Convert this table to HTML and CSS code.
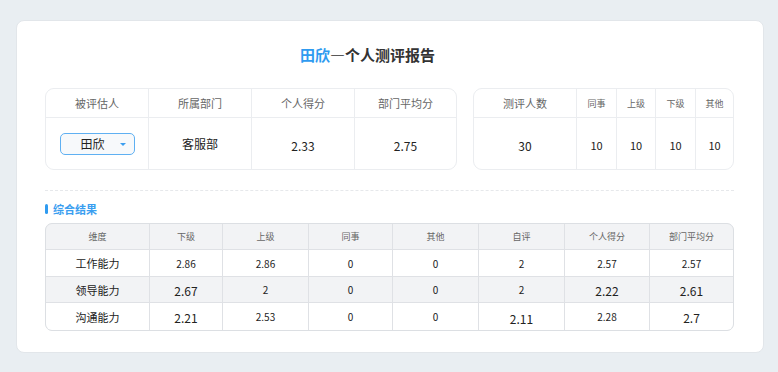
FILE: index.html
```html
<!DOCTYPE html>
<html lang="zh">
<head>
<meta charset="utf-8">
<link rel="stylesheet" href="styles.css">
</head>
<body>
<div class="card">
  <h1 class="title"><span class="name">田欣</span>—个人测评报告</h1>
  <div class="top">
    <div class="grid t1">
      <div class="c h">被评估人</div>
      <div class="c h">所属部门</div>
      <div class="c h">个人得分</div>
      <div class="c h">部门平均分</div>
      <div class="c b"><div class="select"><span>田欣</span><i class="arrow"></i></div></div>
      <div class="c b">客服部</div>
      <div class="c b num">2.33</div>
      <div class="c b num">2.75</div>
    </div>
    <div class="grid t2">
      <div class="c h">测评人数</div>
      <div class="c h sm">同事</div>
      <div class="c h sm">上级</div>
      <div class="c h sm">下级</div>
      <div class="c h sm">其他</div>
      <div class="c b num">30</div>
      <div class="c b num s">10</div>
      <div class="c b num s">10</div>
      <div class="c b num s">10</div>
      <div class="c b num s">10</div>
    </div>
  </div>
  <div class="divider"></div>
  <div class="label">综合结果</div>
  <div class="grid t3">
    <div class="c h3">维度</div>
    <div class="c h3">下级</div>
    <div class="c h3">上级</div>
    <div class="c h3">同事</div>
    <div class="c h3">其他</div>
    <div class="c h3">自评</div>
    <div class="c h3">个人得分</div>
    <div class="c h3">部门平均分</div>

    <div class="c r">工作能力</div>
    <div class="c r n">2.86</div>
    <div class="c r n">2.86</div>
    <div class="c r n">0</div>
    <div class="c r n">0</div>
    <div class="c r n">2</div>
    <div class="c r n">2.57</div>
    <div class="c r n">2.57</div>

    <div class="c r g">领导能力</div>
    <div class="c r g n lg">2.67</div>
    <div class="c r g n">2</div>
    <div class="c r g n">0</div>
    <div class="c r g n">0</div>
    <div class="c r g n">2</div>
    <div class="c r g n lg">2.22</div>
    <div class="c r g n lg">2.61</div>

    <div class="c r">沟通能力</div>
    <div class="c r n lg">2.21</div>
    <div class="c r n">2.53</div>
    <div class="c r n">0</div>
    <div class="c r n">0</div>
    <div class="c r n lg low">2.11</div>
    <div class="c r n">2.28</div>
    <div class="c r n lg">2.7</div>
  </div>
</div>
</body>
</html>
```

FILE: styles.css
```css
* { box-sizing: border-box; }
html, body { margin: 0; }
body {
  width: 778px;
  height: 372px;
  background: #e9eef2;
  padding: 20px 14px 19px 16px;
  font-family: "Noto Sans CJK SC", "Noto Sans", sans-serif;
  color: #333;
}
.card {
  background: #fff;
  border: 1px solid #e2e6ea;
  border-radius: 8px;
  height: 333px;
  padding: 0 29px 0 28px;
}
.title {
  margin: 0;
  padding-top: 24px;
  padding-right: 44px;
  height: 67px;
  text-align: center;
  font-size: 15px;
  line-height: 20px;
  font-weight: 700;
  color: #333;
}
.title .name { color: #2f9bf0; }
.top {
  display: flex;
  gap: 16px;
}
.grid {
  display: grid;
  gap: 1px;
  background: #ebedf0;
  border: 1px solid #ebedf0;
  border-radius: 9px;
  overflow: hidden;
}
.c {
  background: #fff;
  display: flex;
  align-items: center;
  justify-content: center;
  white-space: nowrap;
}
.t1 {
  width: 412px;
  grid-template-columns: 102px 102px 102px 1fr;
  grid-template-rows: 28px 51px;
}
.t2 {
  width: 261px;
  grid-template-columns: 102px 39px 38px 39px 1fr;
  grid-template-rows: 28px 51px;
}
.h { font-size: 11px; color: #666; }
.h.sm { font-size: 9px; }
.b { font-size: 12px; color: #222; }
.num { padding-top: 3px; }
.b.s { font-size: 11px; }
.select {
  width: 75px;
  height: 22px;
  border: 1px solid #5fb0f2;
  border-radius: 5px;
  background: #f7f9fb;
  display: flex;
  align-items: center;
  padding-left: 20px;
  position: relative;
  font-size: 12px;
  color: #222;
}
.arrow {
  position: absolute;
  right: 8px;
  top: 9px;
  width: 0;
  height: 0;
  border-left: 3px solid transparent;
  border-right: 3px solid transparent;
  border-top: 3px solid #3b9ef0;
}
.divider {
  margin-top: 20px;
  border-top: 1px dashed #e6e8eb;
}
.label {
  margin-top: 8px;
  height: 20px;
  line-height: 20px;
  display: flex;
  align-items: center;
  gap: 5px;
  font-size: 11px;
  font-weight: 700;
  color: #3a9ef0;
}
.label::before {
  content: "";
  width: 3px;
  height: 10px;
  border-radius: 2px;
  background: #2f9bf0;
}
.t3 {
  margin-top: 4px;
  background: #dfe1e5;
  border-color: #dcdfe3;
  border-radius: 7px;
  grid-template-columns: 103px 72px 85px 83px 85px 85px 84px 1fr;
  grid-template-rows: 25px 26px 25px 27px;
}
.h3 { background: #f2f3f5; font-size: 9px; color: #666; }
.r { font-size: 11px; color: #222; }
.r.g { background: #f2f3f5; }
.n { font-size: 10px; }
.n.lg { font-size: 12px; padding-top: 1px; }
.n.low { padding-top: 4px; }
```
